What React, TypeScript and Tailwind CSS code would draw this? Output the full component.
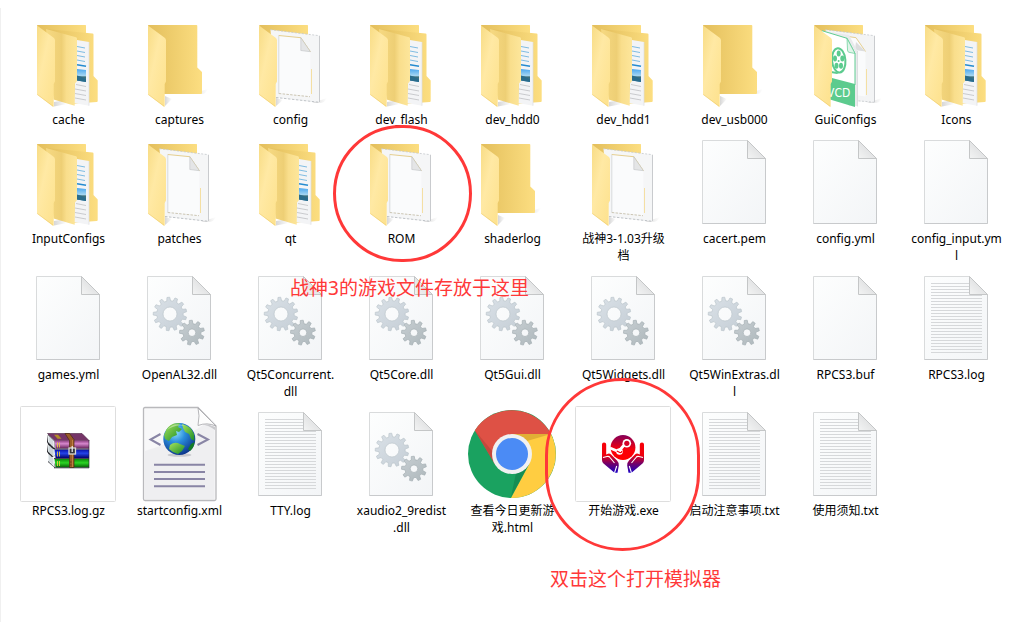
import React from "react";

type Kind =
  | "folder-full"
  | "folder-empty"
  | "folder-page"
  | "folder-vcd"
  | "doc"
  | "dll"
  | "text"
  | "archive"
  | "xml"
  | "chrome"
  | "launcher";

interface FileEntry {
  name: string;
  kind: Kind;
  note?: "rom" | "launch";
}

const files: FileEntry[] = [
  { name: "cache", kind: "folder-full" },
  { name: "captures", kind: "folder-empty" },
  { name: "config", kind: "folder-page" },
  { name: "dev_flash", kind: "folder-full" },
  { name: "dev_hdd0", kind: "folder-full" },
  { name: "dev_hdd1", kind: "folder-full" },
  { name: "dev_usb000", kind: "folder-empty" },
  { name: "GuiConfigs", kind: "folder-vcd" },
  { name: "Icons", kind: "folder-full" },
  { name: "InputConfigs", kind: "folder-full" },
  { name: "patches", kind: "folder-page" },
  { name: "qt", kind: "folder-full" },
  { name: "ROM", kind: "folder-page", note: "rom" },
  { name: "shaderlog", kind: "folder-empty" },
  { name: "战神3-1.03升级\n档", kind: "folder-page" },
  { name: "cacert.pem", kind: "doc" },
  { name: "config.yml", kind: "doc" },
  { name: "config_input.ym\nl", kind: "doc" },
  { name: "games.yml", kind: "doc" },
  { name: "OpenAL32.dll", kind: "dll" },
  { name: "Qt5Concurrent.\ndll", kind: "dll" },
  { name: "Qt5Core.dll", kind: "dll" },
  { name: "Qt5Gui.dll", kind: "dll" },
  { name: "Qt5Widgets.dll", kind: "dll" },
  { name: "Qt5WinExtras.dl\nl", kind: "dll" },
  { name: "RPCS3.buf", kind: "doc" },
  { name: "RPCS3.log", kind: "text" },
  { name: "RPCS3.log.gz", kind: "archive" },
  { name: "startconfig.xml", kind: "xml" },
  { name: "TTY.log", kind: "text" },
  { name: "xaudio2_9redist\n.dll", kind: "dll" },
  { name: "查看今日更新游\n戏.html", kind: "chrome" },
  { name: "开始游戏.exe", kind: "launcher", note: "launch" },
  { name: "启动注意事项.txt", kind: "text" },
  { name: "使用须知.txt", kind: "text" },
];

function gearPath(cx: number, cy: number, outer: number, root: number, hole: number, teeth: number) {
  const points: string[] = [];
  const step = (Math.PI * 2) / teeth;
  const at = (r: number, a: number) => `${(cx + r * Math.cos(a)).toFixed(2)} ${(cy + r * Math.sin(a)).toFixed(2)}`;
  for (let i = 0; i < teeth; i++) {
    const a = i * step - Math.PI / 2 - 0.1;
    points.push(at(root, a - step * 0.3), at(outer, a - step * 0.17), at(outer, a + step * 0.17), at(root, a + step * 0.3));
  }
  return `M${points.join("L")}ZM${cx - hole} ${cy}a${hole} ${hole} 0 1 0 ${hole * 2} 0a${hole} ${hole} 0 1 0 ${-hole * 2} 0Z`;
}

const bigGear = gearPath(39, 44, 16.8, 13.2, 7, 13);
const smallGear = gearPath(61, 62.7, 12.5, 9, 3.8, 9);

function Defs() {
  return (
    <svg className="absolute h-0 w-0" aria-hidden="true">
      <defs>
        <linearGradient id="flap" x1="0" y1="0" x2="1" y2="1">
          <stop offset="0" stopColor="#f8dc85" />
          <stop offset=".4" stopColor="#ffe9a4" />
          <stop offset="1" stopColor="#fde18c" />
        </linearGradient>
        <linearGradient id="back" x1="0" y1="0" x2="1" y2="0">
          <stop offset="0" stopColor="#e3be5c" />
          <stop offset=".35" stopColor="#ecca69" />
          <stop offset="1" stopColor="#fcde81" />
        </linearGradient>
        <linearGradient id="inner" x1="0" y1="0" x2="1" y2="0">
          <stop offset="0" stopColor="#f6d982" />
          <stop offset=".5" stopColor="#eecf75" />
          <stop offset=".66" stopColor="#f9de8c" />
          <stop offset="1" stopColor="#fde69b" />
        </linearGradient>
        <linearGradient id="sheet" x1="0" y1="0" x2="1" y2="1">
          <stop offset="0" stopColor="#fdfefe" />
          <stop offset="1" stopColor="#f3f5f7" />
        </linearGradient>
        <linearGradient id="fold" x1="0" y1="1" x2="1" y2="0">
          <stop offset="0" stopColor="#f3f4f4" />
          <stop offset=".5" stopColor="#e3e4e5" />
          <stop offset="1" stopColor="#fafafa" />
        </linearGradient>
        <linearGradient id="shadow" x1="0" y1="0" x2="1" y2="0">
          <stop offset="0" stopColor="#9a9a9a" stopOpacity=".4" />
          <stop offset="1" stopColor="#9a9a9a" stopOpacity="0" />
        </linearGradient>
        <linearGradient id="photo" x1="0" y1="0" x2="0" y2="1">
          <stop offset="0" stopColor="#4ba7ee" />
          <stop offset=".5" stopColor="#a3d5f2" />
          <stop offset=".62" stopColor="#3f6f78" />
          <stop offset="1" stopColor="#2578b4" />
        </linearGradient>
        <linearGradient id="gearA" x1="0" y1="0" x2="1" y2="1">
          <stop offset="0" stopColor="#dae1e7" />
          <stop offset="1" stopColor="#c5ced6" />
        </linearGradient>
        <linearGradient id="gearB" x1="0" y1="0" x2="1" y2="1">
          <stop offset="0" stopColor="#c7ced2" />
          <stop offset="1" stopColor="#aeb8bc" />
        </linearGradient>
        <radialGradient id="globe" cx=".38" cy=".3" r=".75">
          <stop offset="0" stopColor="#8fe0fb" />
          <stop offset=".4" stopColor="#2b8fdc" />
          <stop offset="1" stopColor="#0b2f86" />
        </radialGradient>
        <linearGradient id="land" x1="0" y1="0" x2="1" y2="1">
          <stop offset="0" stopColor="#a8e45c" />
          <stop offset="1" stopColor="#178a25" />
        </linearGradient>
        <linearGradient id="purple" x1="0" y1="0" x2="0" y2="1">
          <stop offset="0" stopColor="#8c3d80" />
          <stop offset=".4" stopColor="#d687cd" />
          <stop offset="1" stopColor="#632058" />
        </linearGradient>
        <linearGradient id="blue" x1="0" y1="0" x2="0" y2="1">
          <stop offset="0" stopColor="#0710a8" />
          <stop offset=".45" stopColor="#2444e8" />
          <stop offset="1" stopColor="#03036c" />
        </linearGradient>
        <linearGradient id="green" x1="0" y1="0" x2="0" y2="1">
          <stop offset="0" stopColor="#0a8a0a" />
          <stop offset=".45" stopColor="#2bd424" />
          <stop offset="1" stopColor="#045c05" />
        </linearGradient>
        <linearGradient id="steam" gradientUnits="userSpaceOnUse" x1="0" y1="29" x2="0" y2="54">
          <stop offset="0" stopColor="#84005a" />
          <stop offset=".6" stopColor="#fa0008" />
          <stop offset="1" stopColor="#ff0000" />
        </linearGradient>
        <linearGradient id="hand" gradientUnits="userSpaceOnUse" x1="0" y1="36" x2="0" y2="67">
          <stop offset="0" stopColor="#f80008" />
          <stop offset=".42" stopColor="#f0000c" />
          <stop offset=".72" stopColor="#6a0070" />
          <stop offset="1" stopColor="#1800c8" />
        </linearGradient>
      </defs>
    </svg>
  );
}

const Flap = () => (
  <>
    <path d="M17 10.5L34 23q1 1 1 2.500V66.500L33.700 69V91.500L33 91.700 17 79.500Z" fill="url(#flap)" />
    <path d="M17.300 79.500L33.200 91.300" stroke="#efcb69" strokeWidth=".6" />
  </>
);

function FullFolder() {
  return (
    <>
      <path d="M17 10H65.500Q66 10 66 11V80H35Z" fill="url(#back)" />
      <path d="M26 14L72.500 18.600q1 .1 1 1V61l4.200 4.500V86q0 1-1 1L50 89Z" fill="url(#back)" />
      <path d="M57 25L69 27V90.700L54 88Z" fill="#f3f4f6" />
      <path d="M57 31.500l8 1.500M57 36l8 1.500M57 40.500l8 1.500M57 45l8 1.500" stroke="#7fbce2" strokeWidth="1" />
      <path d="M57 49.800l9 1.500" stroke="#258bd0" strokeWidth="1.400" />
      <path d="M57 54L66 55V67L57 65.500Z" fill="url(#photo)" />
      <path d="M57 60.500q4 .5 9 4V67l-9-1.500Z" fill="#2a6c8b" />
      <path d="M56 69.500l10 2M55 74l11 2M55 78.500l11 2M55 83l11 2" stroke="#c4c5c8" strokeWidth=".9" />
      <path d="M69 27V90.700" stroke="#dcdde0" strokeWidth=".7" />
      <path d="M26 14L56 22.300q1 .3 1 1.500V66l-2.300 3V90.700L33.500 84.500Z" fill="url(#inner)" />
      <path d="M34 87l6-1 7 3-13 2.500Z" fill="url(#shadow)" />
      <Flap />
    </>
  );
}

function EmptyFolder() {
  return (
    <>
      <path d="M60 79l17-5-2 3q-1 2-4 2Z" fill="url(#shadow)" />
      <path d="M34 91l7-7-7-3Z" fill="url(#shadow)" />
      <path d="M17 10H65.500Q66.300 10 66.300 11V52.500L71 57V78q0 1-1 1H33Z" fill="url(#back)" />
      <Flap />
    </>
  );
}

function PageFolder() {
  return (
    <>
      <path d="M70 88l15-5-3 4q-2 1-5 1Z" fill="url(#shadow)" />
      <path d="M17 10H65.500Q66 10 66 11V30H30Z" fill="url(#back)" />
      <path d="M28.500 14.700L77.500 20.700V87.300L34 82.500Z" fill="#f5f6f7" />
      <path d="M28.500 14.700L77.500 20.700" stroke="#c4c8cc" strokeWidth=".8" strokeDasharray="2 1.500" />
      <path d="M34 82.500L77.500 87.300" stroke="#b8bcc1" strokeWidth=".9" strokeDasharray="2.500 1.500" />
      <path d="M77.500 21V87" stroke="#c9cbce" strokeWidth="1" />
      <path d="M36.800 20.500L58.800 22.700 68.400 36.700V81.700L36.800 78.500Z" fill="#fafbfc" />
      <path d="M36.800 78.500V20.500" stroke="#d0d3d6" strokeWidth=".8" />
      <path d="M36.800 20.500L58.800 22.700 68.400 36.700" fill="none" stroke="#e5cf90" strokeWidth="1" />
      <path d="M36.800 78.500L68 81.700" stroke="#ccc6b4" strokeWidth="1" strokeDasharray="2.500 1.300" />
      <path d="M69.500 54V79" stroke="#f4dfa3" strokeWidth="1" />
      <path d="M58.800 22.700L68.400 36.700 58.800 35.500Z" fill="#e4e5e6" stroke="#c0c2c5" strokeWidth=".6" />
      <path d="M34 91l7-6-7-2Z" fill="url(#shadow)" />
      <Flap />
    </>
  );
}

function VcdFolder() {
  return (
    <>
      <path d="M70 88l15-5-3 4q-2 1-5 1Z" fill="url(#shadow)" />
      <path d="M17 10H65.500Q66 10 66 11V30H30Z" fill="url(#back)" />
      <path d="M28.500 14.700L77.700 20.700V87.300L50 86Z" fill="#f3f4f5" />
      <path d="M28.500 14.700L77.500 20.700M58 85.500L77.500 87.300" stroke="#c4c8cc" strokeWidth=".8" strokeDasharray="2 1.500" />
      <path d="M77.500 21V87" stroke="#c9cbce" />
      <path d="M38 19.500L59 22.700 68.500 36.500V81.500L58 80Z" fill="#fafbfc" />
      <path d="M38 19.500L59 22.700 68.500 36.500" fill="none" stroke="#e5cf90" />
      <path d="M69.500 54V80" stroke="#f4dfa3" />
      <path d="M59 27L68.500 36.500 58 35Z" fill="#dcddde" />
      <path d="M25 15.700L52 20L60.500 36V91L52 91Z" fill="#e9eaec" />
      <path d="M60.500 36V91.500" stroke="#d2d4d7" strokeWidth=".7" />
      <path d="M25 15.700L50 23.300 58 38.500V91.700L35 84.500Z" fill="#fff" />
      <path d="M25 15.700L50 23.300 58 38.500V70" fill="none" stroke="#60cd93" />
      <path d="M50 23.300L58 38.500 52 37.300Q50.500 37 50.500 35Z" fill="#e0f5e9" stroke="#60cd93" strokeWidth=".7" />
      <path d="M33 62.500L58 69V92L33 84.500Z" fill="#5ccb8e" />
      <ellipse cx="41.700" cy="45.300" rx="6.700" ry="12.200" fill="none" stroke="#5ccb8e" strokeWidth="2" transform="rotate(-5 41.700 45.300)" />
      <path d="M34 56q5 .5 8 2l-2 1q-3-.5-6-1Z" fill="#5ccb8e" />
      <g fill="#5ccb8e">
        <ellipse cx="41.700" cy="38.500" rx="2" ry="3" />
        <ellipse cx="45.300" cy="43.500" rx="2" ry="3" />
        <ellipse cx="44" cy="50.800" rx="2" ry="3" />
        <ellipse cx="39.500" cy="50.800" rx="2" ry="3" />
        <ellipse cx="38" cy="43.500" rx="2" ry="3" />
        <circle cx="41.600" cy="46" r="1" />
      </g>
      <text x="30" y="82" fill="#fff" fontSize="12" className="font-['Liberation_Sans_Narrow','DejaVu_Sans_Condensed',sans-serif]">
        VCD
      </text>
      <Flap />
    </>
  );
}

function Doc({ children }: { children?: React.ReactNode }) {
  return (
    <>
      <path d="M16.500 6.500H61.500L79.500 24.500V89.500H16.500Z" fill="url(#sheet)" stroke="#d9dbdc" />
      <path d="M79.500 24.500V89.500H16.500" fill="none" stroke="#c8cacc" />
      {children}
      <path d="M61.500 6.500L79.500 24.500H61.500Z" fill="url(#fold)" stroke="#c4c6c7" />
    </>
  );
}

function Gears() {
  return (
    <Doc>
      <path d={bigGear} fillRule="evenodd" fill="url(#gearA)" stroke="#bcc5cc" strokeWidth=".7" strokeLinejoin="round" />
      <path d={smallGear} fillRule="evenodd" fill="url(#gearB)" stroke="#a5afb3" strokeWidth=".7" strokeLinejoin="round" />
    </Doc>
  );
}

function TextDoc() {
  return (
    <Doc>
      {Array.from({ length: 24 }, (_, i) => (
        <path key={i} d={`M23 ${13.5 + i * 3}H${i < 4 ? 61 : 74}`} stroke="#d6d8da" />
      ))}
    </Doc>
  );
}

function Archive() {
  return (
    <>
      <rect x=".5" y=".5" width="95" height="95" rx="1" fill="#fff" stroke="#dedede" />
      <path d="M28 28L35 35V43L30 44 35 50 29.500 52 35 58V62L28 56V47L27 46 28 38 27 36Z" fill="#26262c" />
      <path d="M28 29L34.700 35.500V42.500L28 36Z" fill="#e8edf0" />
      <path d="M28 38.500L34.700 44.500V52L28 45.500Z" fill="#dbe3e6" />
      <path d="M28 47.500L34.700 53.500V61.500L28 55Z" fill="#e8edf0" />
      <path d="M30 31V38M32 33V40M30 40V47M32 42V49M30 49V56M32 51V58" stroke="#9aa5ab" strokeWidth=".5" />
      <path d="M27.500 27.500H62L69 34.500H35Z" fill="#763568" stroke="#47203e" strokeWidth=".6" />
      <path d="M34 28.800h4l3.500 4h-4Z" fill="#b18d27" />
      <path d="M34.500 34.500H69V42.500H35.500Z" fill="url(#purple)" />
      <path d="M34.500 43.500H69V52H35.500Z" fill="url(#blue)" />
      <path d="M34.500 53H69V61.500H35.500Z" fill="url(#green)" />
      <path d="M34 43H69M34 52.500H69M34 61.800H69" stroke="#171326" strokeWidth=".8" />
      <path d="M69 34V62" stroke="#26172b" strokeWidth=".6" />
      <path d="M37.500 36.500v5M39.500 36.500v5M37.500 45.500v5M39.500 45.500v5M37.500 55v5M39.500 55v5" stroke="#e6c83c" strokeWidth=".9" />
      <path d="M45 27.500h4.500L54 33.500V61.500H49.500V34.500Z" fill="#9a5c28" stroke="#4b2b11" strokeWidth=".7" />
      <path d="M52.500 34V61" stroke="#c98948" strokeWidth=".8" />
      <rect x="49" y="42" width="6.500" height="6" fill="#36363c" stroke="#d8d8d5" strokeWidth="1.300" />
      <path d="M52.200 40v6" stroke="#f2f2f2" strokeWidth="1.200" />
      <path d="M50.500 56h.8M50.500 59h.8" stroke="#34200f" />
    </>
  );
}

function XmlDoc() {
  return (
    <>
      <path d="M14 1.500H67L85 20V93Q85 94.500 83.500 94.500H14Q12.500 94.500 12.500 93V3Q12.500 1.500 14 1.500Z" fill="#f8f8f9" stroke="#b9b9bc" strokeWidth="1.300" />
      <path d="M14 45Q50 35 83.500 12V93H14Z" fill="#e9e9ec" opacity=".65" />
      <path d="M67 2L85 20Q76 16 67 19.500Q69 9 67 2Z" fill="#fdfdfd" stroke="#a4a4a8" strokeWidth=".8" />
      <path d="M68 1L86 19V0Z" fill="#fff" />
      <path d="M68 19Q76 17 84 21V24Q76 18 68 19Z" fill="#c9c9cd" />
      <path d="M29.500 28L19.500 33.500 29.500 39M66.500 28L77 33.500 66.500 39" fill="none" stroke="#8985a5" strokeWidth="2" />
      <ellipse cx="48.500" cy="49" rx="12" ry="1.800" fill="#b9b9bf" opacity=".7" />
      <circle cx="48.300" cy="33" r="16" fill="url(#globe)" />
      <path d="M34 27Q36 20 43 17.500L49 17 47 21 51 23 48 26 45 25 46 29 41 31 38 35 34 33 33 29Z" fill="url(#land)" />
      <path d="M51 18Q60 20 63 28L63.500 35 60 33 58 28 54 26 52 22Z" fill="url(#land)" />
      <path d="M39 39Q44 35 49 38L54 40 51 45 47 48Q42 47 38 43Z" fill="url(#land)" />
      <path d="M60 38L63.500 36Q63 42 59 45L57 43Z" fill="#137c26" />
      <path d="M36 24Q43 15 54 20Q44 18 36 24Z" fill="#fff" opacity=".4" />
      <path d="M23 58.700H74M23 66H74M23 73H74M23 80.300H74" stroke="#8985a5" strokeWidth="2" />
    </>
  );
}

function Chrome() {
  return (
    <>
      <circle cx="48" cy="48" r="44" fill="#1aa260" />
      <path d="M48 28H87A44 44 0 0 1 47 92L65.300 58Z" fill="#ffcd41" />
      <path d="M48 28H87A44 44 0 0 0 10.800 24.500L30.700 58L48 48Z" fill="#de5145" />
      <path d="M11 24.500L30.700 58 29 46Z" fill="#9d3b31" opacity=".4" />
      <path d="M50 28H87L63 35Z" fill="#d9a832" opacity=".8" />
      <path d="M65 58L47 91 52 67Z" fill="#0e7846" opacity=".5" />
      <circle cx="48" cy="48" r="20" fill="#f1f1f1" />
      <circle cx="48" cy="48" r="16" fill="#4b8bf5" />
    </>
  );
}

const Hand = () => (
  <>
    <path
      d="M27 38.500Q27 36.500 29 36.500 31.200 36.500 31.200 38.500V48.500L33 47.700Q34.500 47 36 48.500L42 54.500Q44 56.500 43.800 59.500L42.500 66.800H39.500L28.500 57.500Q27 56 27 54Z"
      fill="url(#hand)"
    />
    <path d="M28 51.500L32 50.500Q34 50 35 51.500L39.500 57M41.700 60L39.500 66.800" fill="none" stroke="#fff" strokeWidth="1.100" />
  </>
);

function Launcher() {
  return (
    <>
      <rect x=".5" y=".5" width="95" height="95" rx="1" fill="#fff" stroke="#dedede" />
      <circle cx="48" cy="41.500" r="12.400" fill="url(#steam)" />
      <path d="M35 42L43.500 45.500 50 38" fill="none" stroke="#fff" strokeWidth="2.800" />
      <circle cx="51.800" cy="37.300" r="4.300" fill="#fff" />
      <circle cx="51.800" cy="37.300" r="2.600" fill="#d50027" />
      <circle cx="44.500" cy="45.500" r="3.300" fill="#fff" />
      <path d="M41.800 45l3 1.500q2 .5 2-1.500" fill="none" stroke="#f40008" strokeWidth="1.200" />
      <Hand />
      <g transform="matrix(-1 0 0 1 96 0)">
        <Hand />
      </g>
    </>
  );
}

const icons: Record<Kind, React.ComponentType> = {
  "folder-full": FullFolder,
  "folder-empty": EmptyFolder,
  "folder-page": PageFolder,
  "folder-vcd": VcdFolder,
  doc: Doc,
  dll: Gears,
  text: TextDoc,
  archive: Archive,
  xml: XmlDoc,
  chrome: Chrome,
  launcher: Launcher,
};

function RomNote() {
  return (
    <div className="pointer-events-none absolute -top-[9px] left-1/2 z-10 flex w-60 -translate-x-1/2 flex-col items-center text-[#ff3838]">
      <div className="ml-0.5 h-[137px] w-[139px] rounded-full border-3 border-current" />
      <p className="mt-3.5 ml-4 text-[19px] leading-6 whitespace-nowrap">战神3的游戏文件存放于这里</p>
    </div>
  );
}

function LaunchNote() {
  return (
    <div className="pointer-events-none absolute -top-7 left-1/2 z-10 flex w-60 -translate-x-1/2 flex-col items-center text-[#ff3838]">
      <div className="mr-0.5 h-[173px] w-[155px] rounded-full border-3 border-current" />
      <p className="mt-4 ml-6 text-[19px] leading-6 whitespace-nowrap">双击这个打开模拟器</p>
    </div>
  );
}

function FileItem({ file }: { file: FileEntry }) {
  const Icon = icons[file.kind];
  return (
    <li className="relative">
      <button type="button" className="flex w-full flex-col items-center">
        <svg viewBox="0 0 97 96" className="h-24 w-[97px] shrink-0" fill="none" aria-hidden="true">
          <Icon />
        </svg>
        <span className="text-center text-xs leading-[17px] whitespace-pre text-black">{file.name}</span>
      </button>
      {file.note === "rom" && <RomNote />}
      {file.note === "launch" && <LaunchNote />}
    </li>
  );
}

export default function App() {
  return (
    <main className="min-h-screen bg-white pt-2 font-['Noto_Sans','Noto_Sans_CJK_SC',sans-serif]">
      <Defs />
      <ul className="grid min-h-[calc(100vh-8px)] grid-cols-9 content-start gap-y-1.5 border-l border-[#f0f0f0] pt-[7px] pr-[9px] pl-3">
        {files.map((file) => (
          <FileItem key={file.name} file={file} />
        ))}
      </ul>
    </main>
  );
}
